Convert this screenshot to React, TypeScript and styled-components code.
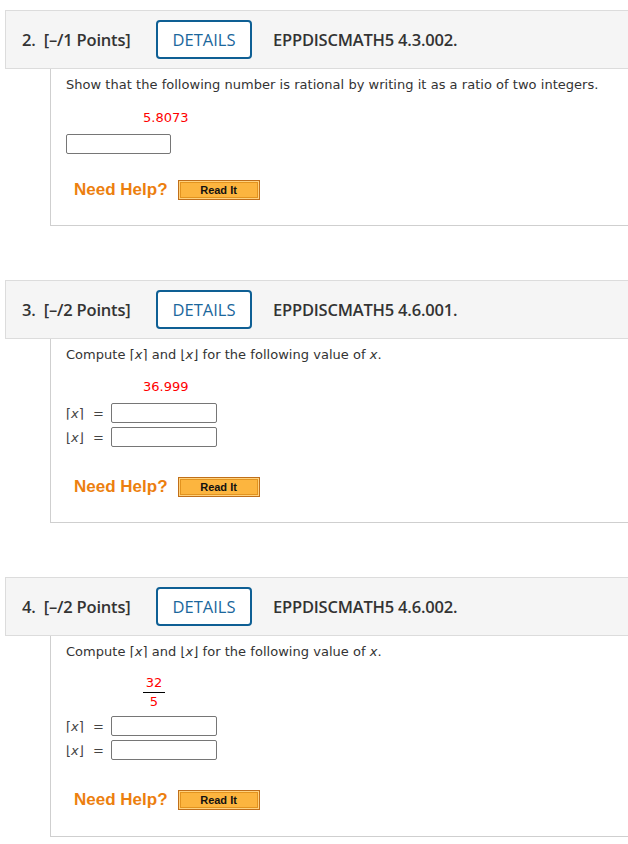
import React from "react";
import styled, { createGlobalStyle } from "styled-components";

const Global = createGlobalStyle`
  html, body { margin: 0; padding: 0; background: #fff; overflow-x: hidden; }
  body { font-family: "DejaVu Sans", Verdana, sans-serif; color: #333; }
`;

const Page = styled.div`
  padding-top: 10px;
  padding-left: 5px;
  display: flex;
  flex-direction: column;
  gap: 54px;
`;

const Question = styled.section`
  margin-right: -20px;
`;

const Header = styled.div`
  display: flex;
  align-items: center;
  height: 59px;
  box-sizing: border-box;
  background: #f5f5f5;
  border: 1px solid #dcdcdc;
  border-right: none;
  padding-left: 16px;
  font-family: "Open Sans", sans-serif;
`;

const Points = styled.span`
  font-size: 16.5px;
  font-weight: 600;
  color: #333;
  letter-spacing: -0.2px;
  width: 134px;
  white-space: pre;
`;

const DetailsButton = styled.span`
  display: inline-flex;
  align-items: center;
  justify-content: center;
  width: 96px;
  height: 39px;
  box-sizing: border-box;
  border: 2px solid #0e5f94;
  border-radius: 4px;
  color: #1b679c;
  font-size: 16.5px;
  font-weight: 500;
  background: #fff;
`;

const Code = styled.span`
  margin-left: 21px;
  font-size: 16.5px;
  font-weight: 600;
  color: #333;
  letter-spacing: -0.2px;
`;

const Body = styled.div<{ $top: number; $bottom: number }>`
  margin-left: 45px;
  border-left: 1px solid #cfcfcf;
  border-bottom: 1px solid #cfcfcf;
  padding: ${(p) => p.$top}px 0 ${(p) => p.$bottom}px 15px;
  display: flex;
  flex-direction: column;
`;

const Prompt = styled.div`
  font-size: 13px;
  line-height: 16px;
  color: #333;
  letter-spacing: 0.03px;
`;

const Value = styled.div<{ $gap: number }>`
  margin-top: ${(p) => p.$gap}px;
  margin-left: 77px;
  color: #f00;
  font-size: 13px;
  line-height: 16px;
`;

const Fraction = styled.div`
  margin-top: 15px;
  margin-left: 77px;
  display: inline-flex;
  flex-direction: column;
  align-items: center;
  align-self: flex-start;
  width: 22px;
  color: #f00;
  font-size: 13px;
  line-height: 16px;
`;

const FracLine = styled.div`
  width: 22px;
  height: 1px;
  background: #000;
  margin: 1px 0 1px;
`;

const TextBox = styled.div<{ $gap: number; $width: number }>`
  margin-top: ${(p) => p.$gap}px;
  width: ${(p) => p.$width}px;
  height: 20px;
  box-sizing: border-box;
  border: 1px solid #767676;
  border-radius: 2px;
  background: #fff;
`;

const Rows = styled.div<{ $gap: number }>`
  margin-top: ${(p) => p.$gap}px;
  display: flex;
  flex-direction: column;
  gap: 4px;
`;

const Row = styled.div`
  display: flex;
  align-items: center;
  height: 20px;
`;

const Sym = styled.span`
  width: 27px;
  font-size: 13px;
  color: #444;
`;

const Eq = styled.span`
  width: 18px;
  font-size: 13px;
  color: #444;
`;

const Help = styled.div<{ $gap: number }>`
  margin-top: ${(p) => p.$gap}px;
  margin-left: 8px;
  display: flex;
  align-items: center;
  gap: 10px;
`;

const HelpLabel = styled.span`
  font-family: "Liberation Sans", Arial, sans-serif;
  font-weight: 700;
  font-size: 17px;
  color: #ec7f0f;
`;

const ReadIt = styled.span`
  display: inline-flex;
  align-items: center;
  justify-content: center;
  width: 82px;
  height: 20px;
  box-sizing: border-box;
  border: 1px solid #c06f1a;
  background: #fcb53f;
  box-shadow: inset 0 0 0 1px #ffd27e, inset 0 0 0 2px #e2931f;
  font-family: "Liberation Sans", Arial, sans-serif;
  font-weight: 700;
  font-size: 11px;
  color: #111;
`;

const I = styled.i`
  font-family: "DejaVu Sans", Verdana, sans-serif;
  font-style: italic;
`;

const Ceil = () => (
  <>
    ⌈<I>x</I>⌉
  </>
);
const Floor = () => (
  <>
    ⌊<I>x</I>⌋
  </>
);

const QHeader = ({ n, pts, code }: { n: number; pts: number; code: string }) => (
  <Header>
    <Points>
      {n}.  [–/{pts} Points]
    </Points>
    <DetailsButton>DETAILS</DetailsButton>
    <Code>{code}</Code>
  </Header>
);

const Inputs = ({ gap }: { gap: number }) => (
  <Rows $gap={gap}>
    <Row>
      <Sym>
        <Ceil />
      </Sym>
      <Eq>=</Eq>
      <TextBox $gap={0} $width={106} />
    </Row>
    <Row>
      <Sym>
        <Floor />
      </Sym>
      <Eq>=</Eq>
      <TextBox $gap={0} $width={106} />
    </Row>
  </Rows>
);

const NeedHelp = ({ gap }: { gap: number }) => (
  <Help $gap={gap}>
    <HelpLabel>Need Help?</HelpLabel>
    <ReadIt>Read It</ReadIt>
  </Help>
);

export default function App() {
  return (
    <>
      <Global />
      <Page>
        <Question>
          <QHeader n={2} pts={1} code="EPPDISCMATH5 4.3.002." />
          <Body $top={8} $bottom={25}>
            <Prompt>Show that the following number is rational by writing it as a ratio of two integers.</Prompt>
            <Value $gap={17}>5.8073</Value>
            <TextBox $gap={8} $width={105} />
            <NeedHelp gap={26} />
          </Body>
        </Question>
        <Question>
          <QHeader n={3} pts={2} code="EPPDISCMATH5 4.6.001." />
          <Body $top={8} $bottom={25}>
            <Prompt>
              Compute <Ceil /> and <Floor /> for the following value of <I>x</I>.
            </Prompt>
            <Value $gap={16}>36.999</Value>
            <Inputs gap={8} />
            <NeedHelp gap={30} />
          </Body>
        </Question>
        <Question>
          <QHeader n={4} pts={2} code="EPPDISCMATH5 4.6.002." />
          <Body $top={8} $bottom={26}>
            <Prompt>
              Compute <Ceil /> and <Floor /> for the following value of <I>x</I>.
            </Prompt>
            <Fraction>
              <span>32</span>
              <FracLine />
              <span>5</span>
            </Fraction>
            <Inputs gap={6} />
            <NeedHelp gap={30} />
          </Body>
        </Question>
      </Page>
    </>
  );
}
